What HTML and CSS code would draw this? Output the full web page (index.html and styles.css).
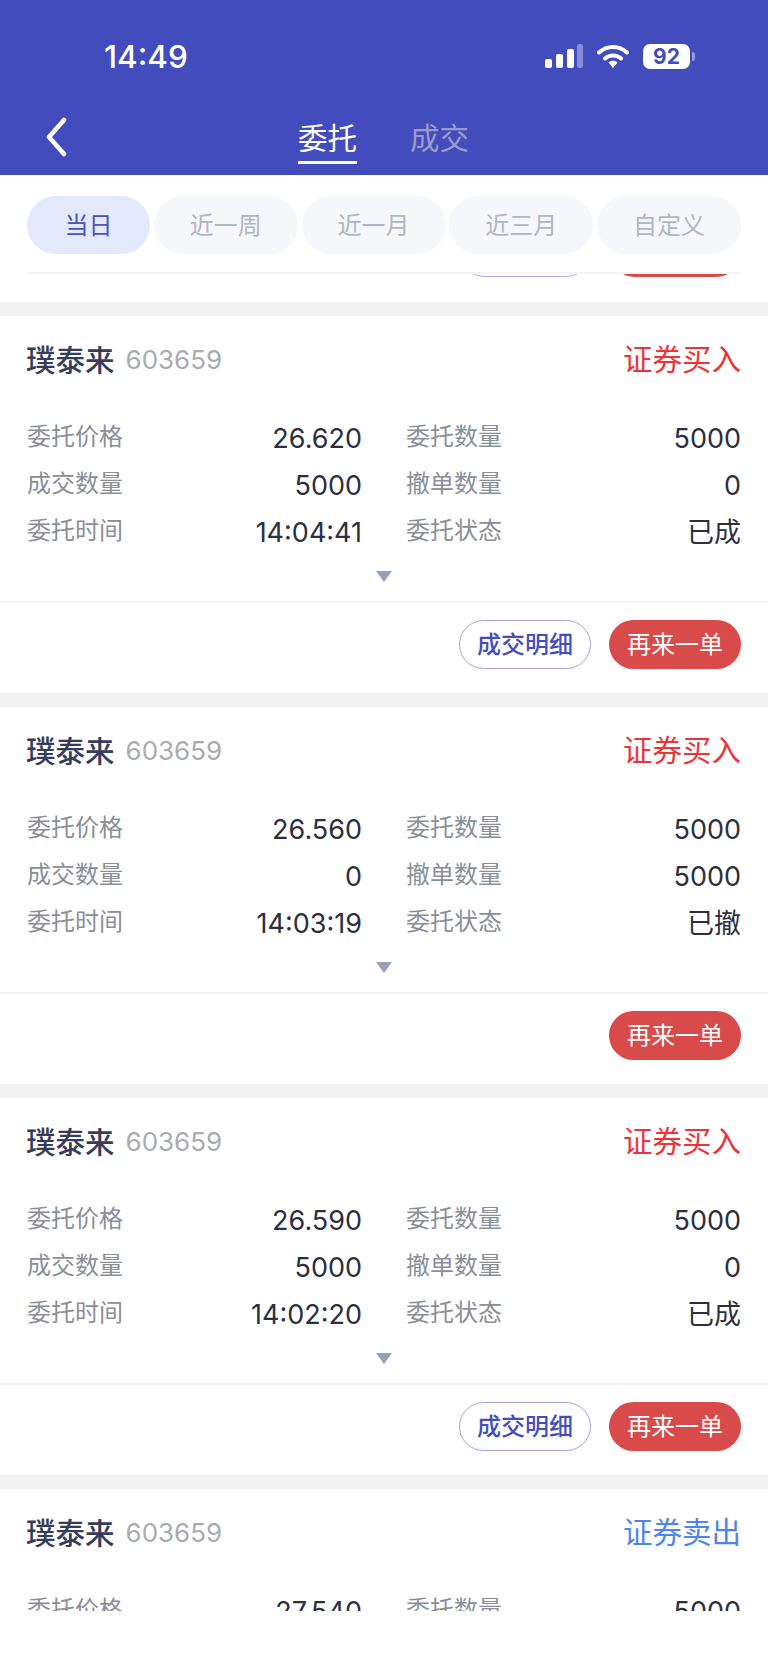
FILE: index.html
```html
<!DOCTYPE html>
<html lang="zh-CN">
<head>
    <meta charset="UTF-8">
    <meta name="viewport" content="width=device-width, initial-scale=1.0">
    <title>委托</title>
    <link rel="stylesheet" href="styles.css">
</head>
<body>
    <header class="header">
        <div class="status-bar">
            <span class="time">14:49</span>
            <div class="status-icons">
                <svg class="signal" width="38" height="24" viewBox="0 0 38 24">
                    <rect x="0" y="15" width="7" height="9" rx="2" fill="#fff"/>
                    <rect x="11" y="10" width="7" height="14" rx="2" fill="#fff"/>
                    <rect x="22" y="5" width="7" height="19" rx="2" fill="#fff"/>
                    <rect x="32" y="0" width="6" height="24" rx="2" fill="#fff" fill-opacity="0.35"/>
                </svg>
                <svg class="wifi" width="32" height="24" viewBox="0 0 32 24">
                    <path d="M2 8.5C10 1 22 1 30 8.5" fill="none" stroke="#fff" stroke-width="4" stroke-linecap="round"/>
                    <path d="M8 14.5C12.500 10.500 19.500 10.500 24 14.500" fill="none" stroke="#fff" stroke-width="4" stroke-linecap="round"/>
                    <path d="M11.500 18.500C14 16 18 16 20.500 18.500L16 24Z" fill="#fff"/>
                </svg>
                <div class="battery">
                    <span class="battery-body">92</span>
                    <span class="battery-nub"></span>
                </div>
            </div>
        </div>
        <nav class="nav">
            <svg class="back" width="22" height="40" viewBox="0 0 22 40">
                <path d="M19 3L4 20L19 37" fill="none" stroke="#fff" stroke-width="4.500" stroke-linecap="round" stroke-linejoin="round"/>
            </svg>
            <div class="tabs">
                <span class="tab tab-active">委托</span>
                <span class="tab">成交</span>
            </div>
        </nav>
    </header>

    <div class="filters">
        <span class="pill pill-active">当日</span>
        <span class="pill">近一周</span>
        <span class="pill">近一月</span>
        <span class="pill">近三月</span>
        <span class="pill">自定义</span>
    </div>

    <main class="list">
        <div class="peek">
            <span class="peek-btn peek-outline"></span>
            <span class="peek-btn peek-red"></span>
        </div>

        <section class="card">
            <div class="card-head">
                <div class="stock"><span class="stock-name">璞泰来</span><span class="stock-code">603659</span></div>
                <span class="side side-buy">证券买入</span>
            </div>
            <div class="grid">
                <div class="row"><span class="label">委托价格</span><span class="value">26.620</span></div>
                <div class="row"><span class="label">委托数量</span><span class="value">5000</span></div>
                <div class="row"><span class="label">成交数量</span><span class="value">5000</span></div>
                <div class="row"><span class="label">撤单数量</span><span class="value">0</span></div>
                <div class="row"><span class="label">委托时间</span><span class="value">14:04:41</span></div>
                <div class="row"><span class="label">委托状态</span><span class="value value-status">已成</span></div>
            </div>
            <div class="expand"><span class="arrow"></span></div>
            <div class="actions">
                <button class="btn btn-outline">成交明细</button>
                <button class="btn btn-red">再来一单</button>
            </div>
        </section>

        <section class="card">
            <div class="card-head">
                <div class="stock"><span class="stock-name">璞泰来</span><span class="stock-code">603659</span></div>
                <span class="side side-buy">证券买入</span>
            </div>
            <div class="grid">
                <div class="row"><span class="label">委托价格</span><span class="value">26.560</span></div>
                <div class="row"><span class="label">委托数量</span><span class="value">5000</span></div>
                <div class="row"><span class="label">成交数量</span><span class="value">0</span></div>
                <div class="row"><span class="label">撤单数量</span><span class="value">5000</span></div>
                <div class="row"><span class="label">委托时间</span><span class="value">14:03:19</span></div>
                <div class="row"><span class="label">委托状态</span><span class="value value-status">已撤</span></div>
            </div>
            <div class="expand"><span class="arrow"></span></div>
            <div class="actions">
                <button class="btn btn-red">再来一单</button>
            </div>
        </section>

        <section class="card">
            <div class="card-head">
                <div class="stock"><span class="stock-name">璞泰来</span><span class="stock-code">603659</span></div>
                <span class="side side-buy">证券买入</span>
            </div>
            <div class="grid">
                <div class="row"><span class="label">委托价格</span><span class="value">26.590</span></div>
                <div class="row"><span class="label">委托数量</span><span class="value">5000</span></div>
                <div class="row"><span class="label">成交数量</span><span class="value">5000</span></div>
                <div class="row"><span class="label">撤单数量</span><span class="value">0</span></div>
                <div class="row"><span class="label">委托时间</span><span class="value">14:02:20</span></div>
                <div class="row"><span class="label">委托状态</span><span class="value value-status">已成</span></div>
            </div>
            <div class="expand"><span class="arrow"></span></div>
            <div class="actions">
                <button class="btn btn-outline">成交明细</button>
                <button class="btn btn-red">再来一单</button>
            </div>
        </section>

        <section class="card">
            <div class="card-head">
                <div class="stock"><span class="stock-name">璞泰来</span><span class="stock-code">603659</span></div>
                <span class="side side-sell">证券卖出</span>
            </div>
            <div class="grid">
                <div class="row"><span class="label">委托价格</span><span class="value">27.540</span></div>
                <div class="row"><span class="label">委托数量</span><span class="value">5000</span></div>
            </div>
        </section>
    </main>
</body>
</html>
```

FILE: styles.css
```css
* {
    box-sizing: border-box;
}
body {
    margin: 0;
    height: 1672px;
    overflow: hidden;
    background: #fff;
    font-family: Inter, "Noto Sans CJK SC", sans-serif;
}
.header {
    height: 175px;
    padding-top: 40px;
    background: #434cbd;
    color: #fff;
}
.status-bar {
    height: 32px;
    display: flex;
    align-items: center;
    justify-content: space-between;
    padding: 0 73px 0 104px;
}
.time {
    font-size: 31.5px;
    font-weight: 500;
}
.status-icons {
    display: flex;
    align-items: center;
}
.signal {
    margin-right: 14px;
}
.wifi {
    margin-right: 14px;
}
.battery {
    display: flex;
    align-items: center;
}
.battery-body {
    width: 47px;
    height: 25px;
    border-radius: 7px;
    background: #fff;
    color: #434cbd;
    font-size: 21px;
    font-weight: 700;
    line-height: 25px;
    text-align: center;
}
.battery-nub {
    width: 3px;
    height: 9px;
    margin-left: 2px;
    border-radius: 0 3px 3px 0;
    background: rgba(255, 255, 255, 0.45);
}
.nav {
    display: flex;
    align-items: flex-start;
    padding-left: 45px;
}
.back {
    margin-top: 45px;
}
.tabs {
    display: flex;
    gap: 53px;
    margin-left: 231px;
    padding-top: 50px;
}
.tab {
    height: 42px;
    font-size: 29.5px;
    line-height: 32px;
    color: #9a9dca;
}
.tab-active {
    color: #fff;
    border-bottom: 3px solid #fff;
}

.filters {
    display: flex;
    justify-content: space-between;
    height: 99px;
    margin: 0 27px;
    padding-top: 21px;
    border-bottom: 2px solid #f3f4f6;
}
.pill {
    width: 144px;
    height: 58px;
    border-radius: 29px;
    background: #f6f7fb;
    color: #b2b6c2;
    font-size: 24px;
    line-height: 60px;
    text-align: center;
}
.pill-active {
    width: 123px;
    background: #e3e8fb;
    color: #4a52c4;
}

.list {
    height: 1337px;
    overflow: hidden;
}
.peek {
    display: flex;
    justify-content: flex-end;
    gap: 45px;
    height: 29px;
    padding-right: 40px;
    margin-top: -1px;
}
.peek-btn {
    width: 105px;
    height: 4px;
    border-radius: 0 0 14px 14px / 0 0 4px 4px;
}
.peek-outline {
    border: 1px solid #a9aee6;
    border-top: 0;
}
.peek-red {
    background: #d94a4a;
}
.card {
    height: 391px;
    border-top: 14px solid #f2f2f2;
}
.card-head {
    display: flex;
    align-items: center;
    justify-content: space-between;
    height: 87px;
    padding: 0 27px;
}
.stock {
    display: flex;
    align-items: center;
    gap: 11px;
}
.stock-name {
    margin: -4px 0 0 -1px;
    font-size: 29.5px;
    font-weight: 500;
    color: #373c58;
}
.stock-code {
    font-size: 26px;
    color: #a9abb0;
}
.side {
    margin-top: -5px;
    font-size: 29.5px;
}
.side-buy {
    color: #ee3338;
}
.side-sell {
    color: #4f83ee;
}
.grid {
    display: grid;
    grid-template-columns: 335px 335px;
    column-gap: 44px;
    grid-auto-rows: 47px;
    padding: 10px 27px 0;
}
.row {
    display: flex;
    align-items: center;
    justify-content: space-between;
}
.label {
    font-size: 24px;
    color: #8a8e98;
    margin-top: -5px;
}
.value {
    font-size: 27px;
    color: #2c2f40;
    margin-top: 4px;
}
.value-status {
    margin-top: 0;
}
.expand {
    display: flex;
    justify-content: center;
    height: 47px;
    padding-top: 17px;
}
.arrow {
    width: 0;
    height: 0;
    border-left: 8px solid transparent;
    border-right: 8px solid transparent;
    border-top: 11px solid #97a0b8;
}
.actions {
    display: flex;
    justify-content: flex-end;
    gap: 18px;
    height: 92px;
    padding: 17px 27px 0;
    border-top: 2px solid #f1f2f4;
}
.btn {
    width: 132px;
    height: 49px;
    padding: 0 0 5px;
    border-radius: 25px;
    font-family: inherit;
    font-size: 24px;
}
.btn-outline {
    border: 1px solid #9ea4e4;
    background: #fff;
    color: #444dc0;
    font-weight: 500;
}
.btn-red {
    border: none;
    background: #d94a4a;
    color: #fff;
}
```
